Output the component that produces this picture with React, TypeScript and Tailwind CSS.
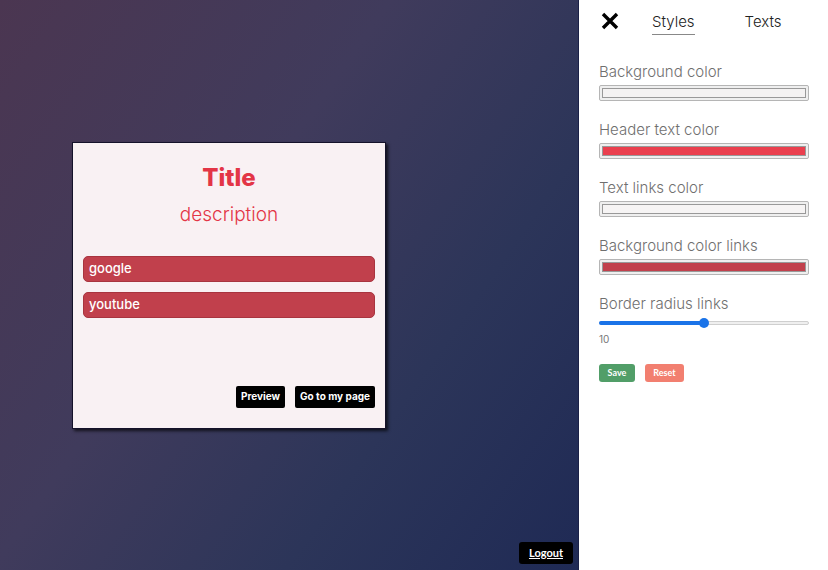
import React, { useState } from 'react';

const fields = [
  { label: 'Background color', color: '#f4f2f2' },
  { label: 'Header text color', color: '#ea3f4e' },
  { label: 'Text links color', color: '#f6f4f4' },
  { label: 'Background color links', color: '#c1404c' },
];

const links = ['google', 'youtube'];

const App: React.FC = () => {
  const [tab, setTab] = useState<'styles' | 'texts'>('styles');
  const radius = 10;

  return (
    <div className="flex h-[570px] w-[828px] overflow-hidden font-['Inter',sans-serif]">
      {/* Main area */}
      <div className="relative flex flex-1 items-center bg-[linear-gradient(125deg,#4b3651_0%,#403b5c_40%,#2c3559_70%,#1f2a55_100%)] pl-[72px]">
        <div className="flex h-[287px] w-[314px] flex-col border border-[#15122a] bg-[#f9f1f3] px-[10px] pb-[20px] pt-[20px] shadow-[2px_2px_3px_rgba(0,0,0,0.7)]">
          <h1 className="text-center text-[24px] font-extrabold leading-[30px] text-[#e33546]">Title</h1>
          <p className="mt-[10px] text-center text-[19px] font-light leading-[24px] text-[#e33546]">description</p>
          <div className="mt-[29px] flex flex-col gap-[10px]">
            {links.map((l) => (
              <a
                key={l}
                className="flex h-[26px] items-center border border-[#a8343f] bg-[#c1404c] px-[5px] text-[13px] font-medium text-white"
                style={{ borderRadius: radius / 2 + 'px' }}
              >
                {l}
              </a>
            ))}
          </div>
          <div className="mt-auto flex justify-end gap-[10px]">
            <button className="h-[22px] rounded-[2px] bg-black px-[5px] text-[10px] font-bold text-white">Preview</button>
            <button className="h-[22px] rounded-[2px] bg-black px-[5px] text-[10px] font-bold text-white">Go to my page</button>
          </div>
        </div>
        <button className="absolute bottom-[6px] right-[5px] h-[22px] rounded-[3px] bg-black px-[10px] font-['Lato',sans-serif] text-[11px] font-bold text-white underline">
          Logout
        </button>
      </div>

      {/* Sidebar */}
      <div className="flex w-[250px] flex-col border-l border-[#1b2147] bg-white pl-[20px] pr-[19px]">
        <div className="flex h-[46px] items-center">
          <svg width="20" height="20" viewBox="0 0 20 20" className="ml-[1px] mb-[4px]">
            <path d="M3 3 L17 17 M17 3 L3 17" stroke="#000" strokeWidth="3.4" strokeLinecap="butt" />
          </svg>
          <button
            onClick={() => setTab('styles')}
            className={`ml-[32px] border-b pb-[2px] text-[15px] font-light leading-[20px] text-[#222] ${tab === 'styles' ? 'border-[#888]' : 'border-transparent'}`}
          >
            Styles
          </button>
          <button
            onClick={() => setTab('texts')}
            className={`ml-[50px] border-b pb-[2px] text-[15px] font-light leading-[20px] text-[#222] ${tab === 'texts' ? 'border-[#888]' : 'border-transparent'}`}
          >
            Texts
          </button>
        </div>

        <div className="mt-[16px] flex flex-col gap-[19px]">
          {fields.map((f) => (
            <div key={f.label} className="flex flex-col">
              <label className="text-[15px] font-light leading-[20px] text-[#6f6f6f]">{f.label}</label>
              <div className="mt-[3px] h-[16px] w-[210px] rounded-[2px] border border-[#b5b5b5] bg-[#efefef] p-[2px]">
                <div className="h-full w-full border border-[#999]" style={{ background: f.color }} />
              </div>
            </div>
          ))}
          <div className="flex flex-col">
            <label className="text-[15px] font-light leading-[20px] text-[#6f6f6f]">Border radius links</label>
            <div className="relative mt-[4px] h-[10px] w-[210px]">
              <div className="absolute left-0 right-0 top-[3px] h-[4px] rounded-full border border-[#cfcfcf] bg-[#efefef]" />
              <div className="absolute left-0 top-[3px] h-[4px] w-[105px] rounded-full bg-[#1a73e8]" />
              <div className="absolute left-[100px] top-0 h-[10px] w-[10px] rounded-full bg-[#1a73e8]" />
            </div>
            <span className="mt-[4px] text-[10px] leading-[14px] text-[#777]">{radius}</span>
          </div>
        </div>

        <div className="mt-[18px] flex gap-[10px] font-['Lato',sans-serif]">
          <button className="h-[18px] w-[36px] rounded-[3px] bg-[#519e68] text-[9px] font-bold text-white">Save</button>
          <button className="h-[18px] w-[39px] rounded-[3px] bg-[#f27f70] text-[9px] font-bold text-white">Reset</button>
        </div>
      </div>
    </div>
  );
};

export default App;
